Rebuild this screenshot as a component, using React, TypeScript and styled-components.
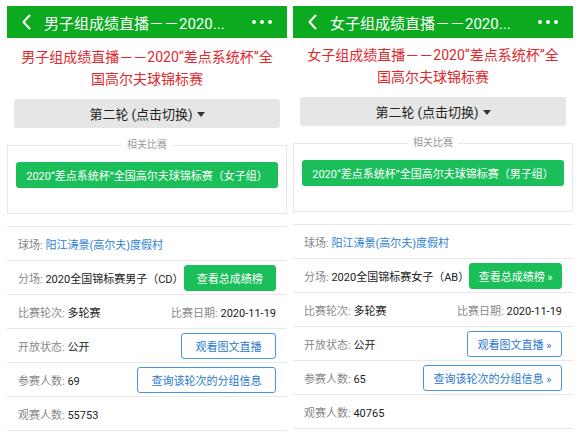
import React from 'react';
import styled, { createGlobalStyle } from 'styled-components';

const GlobalStyle = createGlobalStyle`
  html, body { margin: 0; padding: 0; background: #fff; }
  body { font-family: Roboto, "Noto Sans CJK SC", sans-serif; }
  * { box-sizing: border-box; }
`;

const Page = styled.div`
  display: flex;
  gap: 6px;
  padding: 6px 7px 0;
  width: 580px;
`;

const Panel = styled.section`
  width: 280px;
  display: flex;
  flex-direction: column;
  background: #fff;
`;

const NavBar = styled.header`
  height: 32px;
  background: #0caa1f;
  display: flex;
  align-items: center;
  padding: 0 15px;
  color: #fff;
`;

const NavTitle = styled.div`
  flex: 1;
  margin-left: 13px;
  font-size: 15px;
  white-space: nowrap;
`;

const Dots = styled.div`
  display: flex;
  gap: 4px;
  span {
    width: 4px;
    height: 4px;
    border-radius: 50%;
    background: #fff;
  }
`;

const Headline = styled.h1<{ $top: number }>`
  margin: 0;
  padding: ${(p) => p.$top}px 10px 0;
  font-size: 14px;
  line-height: 22px;
  font-weight: normal;
  color: #e0282d;
  text-align: center;
`;

const SwitchButton = styled.div`
  margin: 9px 7px 0;
  height: 29px;
  background: #e6e6e6;
  border-radius: 3px;
  font-size: 13px;
  color: #222;
  display: flex;
  align-items: center;
  justify-content: center;
  gap: 4px;
`;

const Caret = styled.span`
  width: 0;
  height: 0;
  border-left: 4px solid transparent;
  border-right: 4px solid transparent;
  border-top: 5px solid #333;
  margin-top: 1px;
`;

const Related = styled.fieldset`
  margin: 10px 0 0;
  padding: 0 8px 25px;
  border: 1px solid #e8e8e8;
  min-width: 0;
`;

const RelatedLegend = styled.legend`
  margin: 0 auto;
  padding: 0 5px;
  font-size: 10px;
  line-height: 14px;
  color: #999;
`;

const RelatedButton = styled.div`
  margin-top: 10px;
  height: 26px;
  background: #1bbf5a;
  border-radius: 3px;
  color: #fff;
  font-size: 11px;
  display: flex;
  align-items: center;
  justify-content: center;
  white-space: nowrap;
`;

const InfoList = styled.div`
  margin-top: 12px;
  display: flex;
  flex-direction: column;
`;

const Row = styled.div`
  height: 34px;
  border-top: 1px solid #e8e8e8;
  padding: 0 11px;
  display: flex;
  align-items: center;
  justify-content: space-between;
  font-size: 11px;
  white-space: nowrap;
  &:last-child {
    height: 35px;
    border-bottom: 1px solid #e8e8e8;
  }
`;

const Field = styled.span``;

const Label = styled.span`
  color: #888;
`;

const Value = styled.span<{ $link?: boolean }>`
  color: ${(p) => (p.$link ? '#2a80d8' : '#222')};
`;

const ActionButton = styled.div<{ $solid?: boolean; $width: number }>`
  width: ${(p) => p.$width}px;
  height: 26px;
  border-radius: 3px;
  font-size: 11px;
  display: flex;
  align-items: center;
  justify-content: center;
  background: ${(p) => (p.$solid ? '#1bbf5a' : '#fff')};
  color: ${(p) => (p.$solid ? '#fff' : '#2a78cc')};
  border: 1px solid ${(p) => (p.$solid ? '#1bbf5a' : '#4a93de')};
`;

const BackIcon = () => (
  <svg width="9" height="16" viewBox="0 0 9 16">
    <polyline points="7.5,1.5 1.5,8 7.5,14.5" fill="none" stroke="#fff" strokeWidth="2" strokeLinecap="round" strokeLinejoin="round" />
  </svg>
);

type PanelData = {
  nav: string;
  titleA: string;
  titleB: string;
  related: string;
  venue: string;
  players: string;
  viewers: string;
  arrows: boolean;
  top: number;
};

const panels: PanelData[] = [
  {
    nav: '男子组成绩直播－－2020...',
    titleA: '男子组成绩直播－－2020“差点系统杯”全',
    titleB: '国高尔夫球锦标赛',
    related: '2020“差点系统杯”全国高尔夫球锦标赛（女子组）',
    venue: '2020全国锦标赛男子（CD）',
    players: '69',
    viewers: '55753',
    arrows: false,
    top: 8,
  },
  {
    nav: '女子组成绩直播－－2020...',
    titleA: '女子组成绩直播－－2020“差点系统杯”全',
    titleB: '国高尔夫球锦标赛',
    related: '2020“差点系统杯”全国高尔夫球锦标赛（男子组）',
    venue: '2020全国锦标赛女子（AB）',
    players: '65',
    viewers: '40765',
    arrows: true,
    top: 6,
  },
];

const ResultPanel = ({ d }: { d: PanelData }) => {
  const tail = d.arrows ? ' »' : '';
  return (
    <Panel>
      <NavBar>
        <BackIcon />
        <NavTitle>{d.nav}</NavTitle>
        <Dots>
          <span />
          <span />
          <span />
        </Dots>
      </NavBar>
      <Headline $top={d.top}>
        {d.titleA}
        <br />
        {d.titleB}
      </Headline>
      <SwitchButton>
        第二轮 (点击切换) <Caret />
      </SwitchButton>
      <Related>
        <RelatedLegend>相关比赛</RelatedLegend>
        <RelatedButton>{d.related}</RelatedButton>
      </Related>
      <InfoList>
        <Row>
          <Field>
            <Label>球场: </Label>
            <Value $link>阳江涛景(高尔夫)度假村</Value>
          </Field>
        </Row>
        <Row>
          <Field>
            <Label>分场: </Label>
            <Value>{d.venue}</Value>
          </Field>
          <ActionButton $solid $width={95}>查看总成绩榜{tail}</ActionButton>
        </Row>
        <Row>
          <Field>
            <Label>比赛轮次: </Label>
            <Value>多轮赛</Value>
          </Field>
          <Field>
            <Label>比赛日期: </Label>
            <Value>2020-11-19</Value>
          </Field>
        </Row>
        <Row>
          <Field>
            <Label>开放状态: </Label>
            <Value>公开</Value>
          </Field>
          <ActionButton $width={95}>观看图文直播{tail}</ActionButton>
        </Row>
        <Row>
          <Field>
            <Label>参赛人数: </Label>
            <Value>{d.players}</Value>
          </Field>
          <ActionButton $width={139}>查询该轮次的分组信息{tail}</ActionButton>
        </Row>
        <Row>
          <Field>
            <Label>观赛人数: </Label>
            <Value>{d.viewers}</Value>
          </Field>
        </Row>
      </InfoList>
    </Panel>
  );
};

export default function App() {
  return (
    <>
      <GlobalStyle />
      <Page>
        {panels.map((d) => (
          <ResultPanel key={d.nav} d={d} />
        ))}
      </Page>
    </>
  );
}
